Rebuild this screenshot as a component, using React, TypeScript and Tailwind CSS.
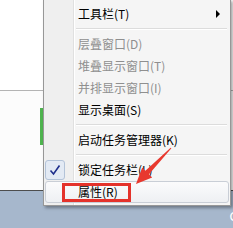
import React from 'react';

const FONT = { fontFamily: '"Noto Sans CJK SC", "Noto Sans", sans-serif' };

type Item = { label: string; disabled?: boolean };

function MenuItem({ label, disabled, children }: Item & { children?: React.ReactNode }) {
  return (
    <div className="h-[22px] flex items-center justify-between pl-[34px] pr-[10px]">
      <span className={disabled ? 'text-[#8f8f8f]' : 'text-black'}>{label}</span>
      {children}
    </div>
  );
}

function Separator() {
  return (
    <div className="h-[8px] flex flex-col justify-center pl-[32px] pr-[3px]">
      <div className="h-[1px] bg-[#dcdcdc]" />
      <div className="h-[1px] bg-white" />
    </div>
  );
}

export default function App() {
  return (
    <div className="relative w-[233px] h-[228px] overflow-hidden bg-white text-[12px] leading-none" style={FONT}>
      {/* page behind the menu */}
      <div className="flex flex-col h-full">
        <div className="h-[90px] bg-white" />
        <div className="h-[1px] bg-[#b4b4b4]" />
        <div className="h-[99px] bg-[#fcfcfc] pt-[17px]">
          <div className="ml-[40px] w-[3px] h-[37px] bg-[#4fb44f]" />
        </div>
        <div className="h-[1px] bg-[#4d4d4d]" />
        <div className="flex-1 bg-[#a6b7cc] flex justify-end items-start pt-[19px]">
          <span className="text-white text-[13px] mr-[-6px]" style={{ fontFamily: '"Liberation Sans", sans-serif' }}>C</span>
        </div>
      </div>

      {/* context menu */}
      <div className="absolute left-[43px] top-[-1px] w-[188px] border border-[#979797] bg-[#f5f5f5] pt-[3px] pb-[2px] shadow-[2px_2px_3px_rgba(0,0,0,0.35)]">
        <div className="absolute left-0 top-0 bottom-0 w-[29px] bg-[#efefef]" />
        <div className="absolute left-[29px] top-0 bottom-0 w-[1px] bg-[#e0e0e0]" />
        <div className="absolute left-[30px] top-0 bottom-0 w-[1px] bg-white" />
        <div className="relative">
          <MenuItem label="工具栏(T)">
            <span className="w-0 h-0 border-y-[4px] border-y-transparent border-l-[4px] border-l-black" />
          </MenuItem>
          <Separator />
          <MenuItem label="层叠窗口(D)" disabled />
          <MenuItem label="堆叠显示窗口(T)" disabled />
          <MenuItem label="并排显示窗口(I)" disabled />
          <MenuItem label="显示桌面(S)" />
          <Separator />
          <MenuItem label="启动任务管理器(K)" />
          <Separator />
          <div className="h-[22px] flex items-center">
            <div className="ml-[1px] w-[20px] h-[20px] rounded-[3px] border border-[#b3c3d8] bg-[#e3eaf4] flex items-center justify-center">
              <svg width="12" height="12" viewBox="0 0 12 12">
                <path d="M1.5 6.5 L4.5 10 L10.5 1.5" fill="none" stroke="#1f2f8c" strokeWidth="1.6" />
              </svg>
            </div>
            <span className="ml-[13px] text-black">锁定任务栏(L)</span>
          </div>
          <div className="h-[22px] mx-[1px] flex items-center pl-[32px] rounded-[3px] border border-[#c9ced6] bg-gradient-to-b from-[#fbfbfc] to-[#eef0f3]">
            <span className="text-black">属性(R)</span>
          </div>
        </div>
      </div>

      {/* annotation */}
      <div className="absolute left-[62px] top-[183px] w-[69px] h-[19px] border-[3px] border-[#e4322b]" />
      <svg className="absolute left-0 top-0 pointer-events-none" width="233" height="228">
        <polygon
          points="171.4,148.3 149,174.2 152.2,177.4 136,184 142.2,167.6 145.4,170.8 170.6,147.7"
          fill="#e8392f"
        />
      </svg>
    </div>
  );
}
